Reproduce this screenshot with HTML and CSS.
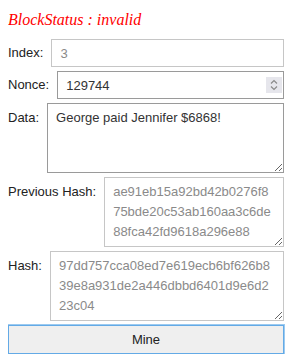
FILE: index.html
```html
<!DOCTYPE html>
<html lang="en">
<head>
  <meta name="viewport" content="width=device-width, initial-scale=1.0">
  <title>Block</title>
  <link rel="stylesheet" href="styles.css">
</head>
<body>
  <div class="block">
    <p class="block-status">BlockStatus : invalid</p>
    <div class="field-row">
      <label class="field-label">Index:</label>
      <input type="text" class="field-input readonly" value="3" readonly>
    </div>
    <div class="field-row">
      <label class="field-label">Nonce:</label>
      <div class="number-wrap">
        <input type="text" class="field-input" value="129744">
        <span class="spinner">
          <svg width="16" height="16" viewBox="0 0 16 16">
            <polyline points="5,6.5 8,3.5 11,6.5" fill="none" stroke="#8a8a8a" stroke-width="1.2"/>
            <polyline points="5,9.5 8,12.5 11,9.5" fill="none" stroke="#8a8a8a" stroke-width="1.2"/>
          </svg>
        </span>
      </div>
    </div>
    <div class="field-row">
      <label class="field-label area-label">Data:</label>
      <textarea class="field-area">George paid Jennifer $6868!</textarea>
    </div>
    <div class="field-row">
      <label class="field-label area-label">Previous Hash:</label>
      <textarea class="field-area readonly hash" readonly>ae91eb15a92bd42b0276f875bde20c53ab160aa3c6de88fca42fd9618a296e88</textarea>
    </div>
    <div class="field-row">
      <label class="field-label area-label">Hash:</label>
      <textarea class="field-area readonly hash" readonly>97dd757cca08ed7e619ecb6bf626b839e8a931de2a446dbbd6401d9e6d223c04</textarea>
    </div>
    <button class="mine-button">Mine</button>
  </div>
</body>
</html>
```

FILE: styles.css
```css
body {
  margin: 8px;
  font-family: 'Liberation Sans', Arial, sans-serif;
  font-size: 13px;
  color: #222;
  background-color: #ffffff;
}
.block {
  width: 276px;
  display: flex;
  flex-direction: column;
  gap: 4px;
}
.block-status {
  margin: 2px 0 5px;
  font-family: 'Liberation Serif', 'Times New Roman', serif;
  font-style: italic;
  font-size: 16px;
  line-height: 20px;
  color: #ff0000;
}
.field-row {
  display: flex;
  align-items: flex-start;
}
.field-label {
  margin-right: 8px;
  padding-top: 4px;
  line-height: 20px;
  white-space: nowrap;
}
.area-label {
  padding-top: 5px;
}
.field-input {
  flex: 1;
  min-width: 0;
  width: 100%;
  height: 28px;
  box-sizing: border-box;
  padding: 3px 8px;
  border: 1px solid #9a9a9a;
  border-radius: 0;
  font-family: inherit;
  font-size: 13px;
  line-height: 20px;
  color: #333;
  outline: none;
}
.number-wrap {
  flex: 1;
  display: flex;
  position: relative;
}
.spinner {
  position: absolute;
  top: 6px;
  right: 2px;
  width: 16px;
  height: 16px;
  background-color: #e6e6ec;
  display: flex;
}
.field-area {
  flex: 1;
  min-width: 0;
  height: 70px;
  box-sizing: border-box;
  margin: 0;
  padding: 4px 8px;
  border: 1px solid #9a9a9a;
  border-radius: 0;
  font-family: inherit;
  font-size: 13px;
  line-height: 20px;
  color: #333;
  overflow: hidden;
  resize: vertical;
  outline: none;
}
.hash {
  word-break: break-all;
}
.readonly {
  border-color: #c6c6c6;
  color: #8a8a8a;
}
.mine-button {
  height: 29px;
  border: 1px solid #63aae6;
  box-shadow: 0 0 0 1px #9ccaf0;
  border-radius: 0;
  background-color: #efefef;
  font-family: inherit;
  font-size: 13px;
  color: #222;
}
```
